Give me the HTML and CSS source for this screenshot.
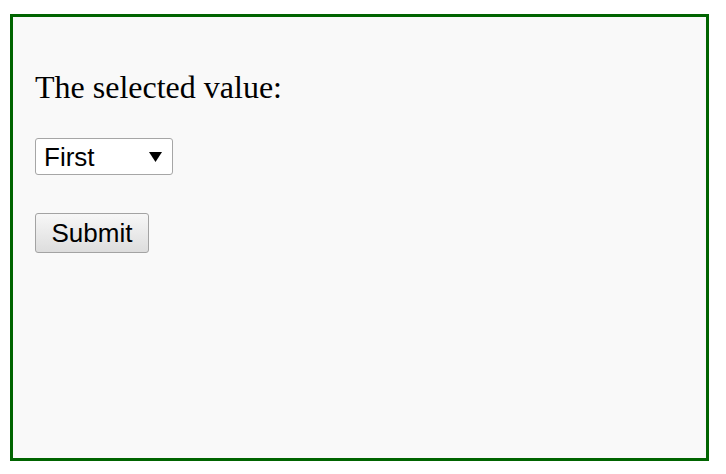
FILE: index.html
```html
<!DOCTYPE html>
<html>
<head>
<meta charset="utf-8">
<link rel="stylesheet" href="styles.css">
</head>
<body>
<div class="frame">
  <p class="label">The selected value:</p>
  <div class="select-wrap">
    <select class="select">
      <option>First</option>
      <option>Second</option>
      <option>Third</option>
    </select>
    <svg class="arrow" width="13" height="10" viewBox="0 0 13 10"><polygon points="0,0 13,0 6.5,10" fill="#000"/></svg>
  </div>
  <button class="submit" type="button">Submit</button>
</div>
</body>
</html>
```

FILE: styles.css
```css
html, body {
  margin: 0;
  padding: 0;
  background: #ffffff;
}

.frame {
  box-sizing: border-box;
  width: 699px;
  height: 447px;
  margin: 14px 0 0 10px;
  border: 3px solid #006400;
  background: #f9f9f9;
  padding: 52px 0 0 22px;
  display: flex;
  flex-direction: column;
  align-items: flex-start;
}

.label {
  margin: 0;
  font-family: "Liberation Serif", "Times New Roman", serif;
  font-size: 32px;
  line-height: 36px;
  color: #000;
}

.select-wrap {
  position: relative;
  margin-top: 33px;
  width: 138px;
  height: 37px;
}

.select {
  -webkit-appearance: none;
  appearance: none;
  box-sizing: border-box;
  width: 138px;
  height: 37px;
  margin: 0;
  padding: 0 0 0 8px;
  border: 1px solid #a6a6a6;
  border-radius: 3px;
  background: #ffffff;
  font-family: "Liberation Sans", Arial, sans-serif;
  font-size: 26px;
  color: #000;
  outline: none;
}

.arrow {
  position: absolute;
  left: 114px;
  top: 14px;
  pointer-events: none;
}

.submit {
  box-sizing: border-box;
  margin-top: 38px;
  width: 114px;
  height: 40px;
  padding: 0;
  border: 1px solid #a3a3a3;
  border-radius: 3px;
  background: linear-gradient(#f7f7f7, #dddddd);
  font-family: "Liberation Sans", Arial, sans-serif;
  font-size: 26px;
  color: #000;
}
```
